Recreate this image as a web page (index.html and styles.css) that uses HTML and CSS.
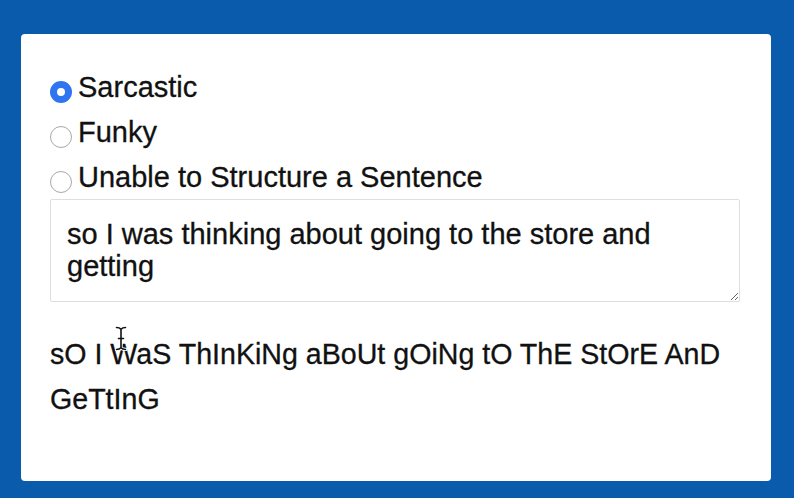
FILE: index.html
```html
<!DOCTYPE html>
<html lang="en">
<head>
<meta charset="utf-8">
<title>Sarcastic text</title>
<link rel="stylesheet" href="styles.css">
</head>
<body>
<main class="card">
  <label class="row">
    <input class="radio" type="radio" name="mode" checked>
    <span class="label-text">Sarcastic</span>
  </label>
  <label class="row">
    <input class="radio" type="radio" name="mode">
    <span class="label-text">Funky</span>
  </label>
  <label class="row">
    <input class="radio" type="radio" name="mode">
    <span class="label-text">Unable to Structure a Sentence</span>
  </label>
  <textarea class="input">so I was thinking about going to the store and getting</textarea>
  <p class="output">sO I WaS ThInKiNg aBoUt gOiNg tO ThE StOrE AnD GeTtInG</p>
  <svg class="cursor" width="12" height="25" viewBox="0 0 12 25" aria-hidden="true">
    <path d="M1.5 1.5 Q4.5 1.5 6 3.2 Q7.5 1.5 10.5 1.5 M6 3.2 V21.8 M1.5 23.5 Q4.5 23.5 6 21.8 Q7.5 23.5 10.5 23.5 M3.5 12.5 H8.5" fill="none" stroke="#fff" stroke-width="3.4" stroke-linecap="round"/>
    <path d="M1.5 1.5 Q4.5 1.5 6 3.2 Q7.5 1.5 10.5 1.5 M6 3.2 V21.8 M1.5 23.5 Q4.5 23.5 6 21.8 Q7.5 23.5 10.5 23.5 M3.5 12.5 H8.5" fill="none" stroke="#111" stroke-width="1.6" stroke-linecap="round"/>
  </svg>
</main>
</body>
</html>
```

FILE: styles.css
```css
html, body {
  margin: 0;
  padding: 0;
}

body {
  background: #0a5bab;
  width: 794px;
  height: 498px;
  overflow: hidden;
  padding-top: 34px;
  padding-left: 21px;
  box-sizing: border-box;
  font-family: "Liberation Sans", Arial, Helvetica, sans-serif;
  color: #111;
}

.card {
  position: relative;
  width: 750px;
  height: 447px;
  box-sizing: border-box;
  background: #fff;
  border-radius: 4px;
  padding: 31px 29px 0 29px;
}

.row {
  display: flex;
  align-items: center;
  gap: 6px;
  height: 45px;
}

.label-text {
  font-size: 29px;
  line-height: 45px;
  -webkit-text-stroke: 0.3px #111;
}

.radio {
  appearance: none;
  -webkit-appearance: none;
  width: 22px;
  height: 22px;
  margin: 8px 0 0 0;
  border-radius: 50%;
  border: 1px solid #a8a8a8;
  background: #fff;
  box-sizing: border-box;
  flex: none;
}

.radio:checked {
  border: 7px solid #2f74f0;
  background: #fff;
}

.input {
  display: block;
  width: 690px;
  height: 103px;
  box-sizing: border-box;
  margin: -1px 0 0 0;
  padding: 18px 16px 16px 16px;
  border: 1px solid #dedede;
  border-radius: 2px;
  font-family: "Liberation Sans", Arial, Helvetica, sans-serif;
  font-size: 29px;
  line-height: 32px;
  color: #111;
  -webkit-text-stroke: 0.3px #111;
  background: #fff;
  resize: vertical;
  outline: none;
}

.output {
  margin: 30px 0 0 0;
  font-size: 28.6px;
  line-height: 45px;
  -webkit-text-stroke: 0.3px #111;
}

.cursor {
  position: absolute;
  left: 94px;
  top: 292px;
}
```
